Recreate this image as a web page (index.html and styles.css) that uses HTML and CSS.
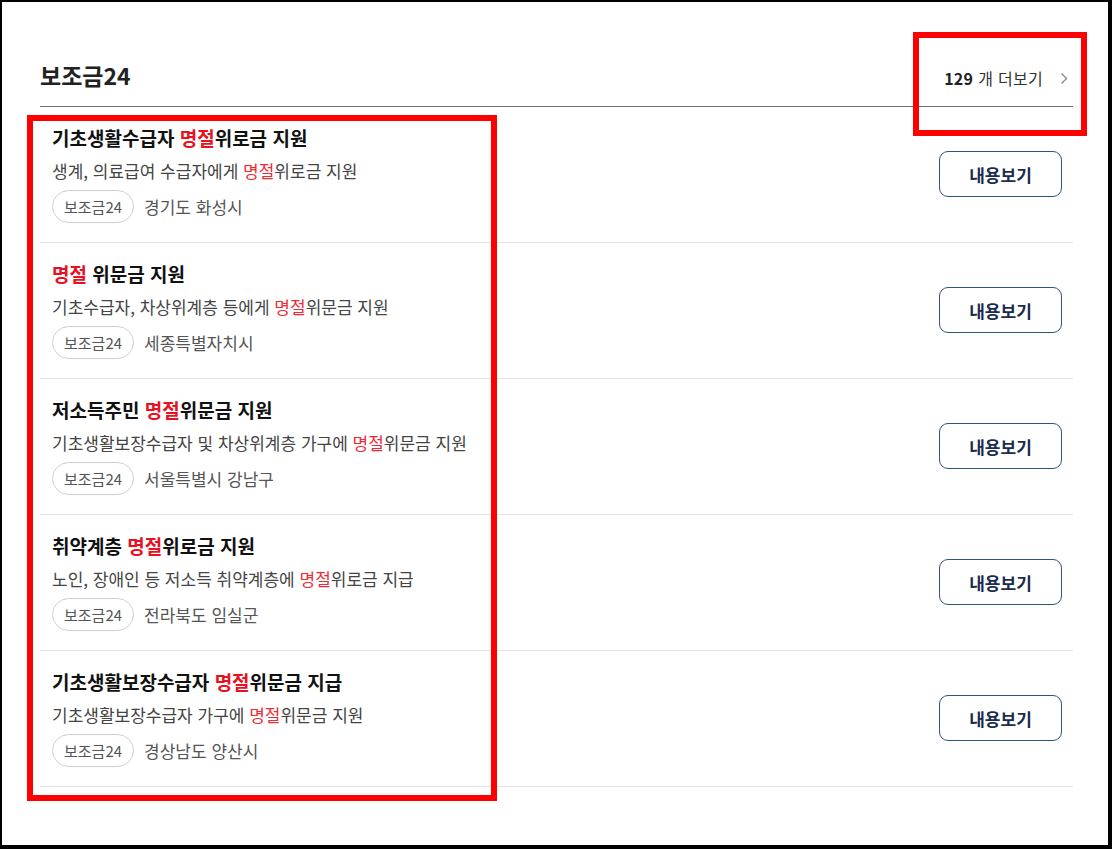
FILE: index.html
```html
<!DOCTYPE html>
<html lang="ko">
<head>
    <meta charset="UTF-8">
    <meta name="viewport" content="width=device-width, initial-scale=1.0">
    <title>보조금24</title>
    <link rel="stylesheet" href="styles.css">
</head>
<body>
    <div class="frame">
        <div class="section">
            <!-- En-tête -->
            <div class="section-head">
                <h2 class="section-title">보조금24</h2>
                <a class="more-link" href="#"><strong>129</strong> 개 더보기<svg class="chevron" width="8" height="13" viewBox="0 0 8 13"><path d="M1.5 1.5 L6.5 6.5 L1.5 11.5" fill="none" stroke="#888" stroke-width="1.4"/></svg></a>
            </div>

            <!-- Liste -->
            <ul class="list">
                <li class="item">
                    <div class="item-body">
                        <h3 class="item-title">기초생활수급자 <em>명절</em>위로금 지원</h3>
                        <p class="item-desc">생계, 의료급여 수급자에게 <em>명절</em>위로금 지원</p>
                        <div class="item-meta"><span class="tag">보조금24</span><span class="region">경기도 화성시</span></div>
                    </div>
                    <button class="view-btn">내용보기</button>
                </li>
                <li class="item">
                    <div class="item-body">
                        <h3 class="item-title"><em>명절</em> 위문금 지원</h3>
                        <p class="item-desc">기초수급자, 차상위계층 등에게 <em>명절</em>위문금 지원</p>
                        <div class="item-meta"><span class="tag">보조금24</span><span class="region">세종특별자치시</span></div>
                    </div>
                    <button class="view-btn">내용보기</button>
                </li>
                <li class="item">
                    <div class="item-body">
                        <h3 class="item-title">저소득주민 <em>명절</em>위문금 지원</h3>
                        <p class="item-desc">기초생활보장수급자 및 차상위계층 가구에 <em>명절</em>위문금 지원</p>
                        <div class="item-meta"><span class="tag">보조금24</span><span class="region">서울특별시 강남구</span></div>
                    </div>
                    <button class="view-btn">내용보기</button>
                </li>
                <li class="item">
                    <div class="item-body">
                        <h3 class="item-title">취약계층 <em>명절</em>위로금 지원</h3>
                        <p class="item-desc">노인, 장애인 등 저소득 취약계층에 <em>명절</em>위로금 지급</p>
                        <div class="item-meta"><span class="tag">보조금24</span><span class="region">전라북도 임실군</span></div>
                    </div>
                    <button class="view-btn">내용보기</button>
                </li>
                <li class="item">
                    <div class="item-body">
                        <h3 class="item-title">기초생활보장수급자 <em>명절</em>위문금 지급</h3>
                        <p class="item-desc">기초생활보장수급자 가구에 <em>명절</em>위문금 지원</p>
                        <div class="item-meta"><span class="tag">보조금24</span><span class="region">경상남도 양산시</span></div>
                    </div>
                    <button class="view-btn">내용보기</button>
                </li>
            </ul>
        </div>

        <!-- Cadres rouges d'annotation -->
        <div class="mark mark-more"></div>
        <div class="mark mark-list"></div>
    </div>
</body>
</html>
```

FILE: styles.css
```css
/* Styles globaux */
html, body {
    margin: 0;
    padding: 0;
    background: #fff;
    font-family: "Noto Sans CJK KR", "Noto Sans", sans-serif;
    color: #222;
}

.frame {
    position: relative;
    box-sizing: border-box;
    width: 1112px;
    height: 849px;
    border: 2px solid #000;
    border-right-width: 4px;
    border-bottom-width: 4px;
    padding: 58px 35px 0 38px;
}

/* En-tête */
.section-head {
    display: flex;
    align-items: center;
    justify-content: space-between;
    padding: 0 4px 16px 0;
    border-bottom: 1px solid #6f6f6f;
}

.section-title {
    margin: 0;
    font-size: 23px;
    line-height: 30px;
    font-weight: 700;
    color: #222;
}

.more-link {
    display: flex;
    align-items: center;
    margin-top: 6px;
    font-size: 16px;
    line-height: 24px;
    color: #333;
    text-decoration: none;
    white-space: pre;
    letter-spacing: 0.3px;
}

.more-link strong {
    font-weight: 700;
    color: #222;
}

.chevron {
    margin-left: 17px;
    margin-right: 1px;
}

/* Liste */
.list {
    list-style: none;
    margin: 0;
    padding: 0;
}

.item {
    display: flex;
    align-items: center;
    justify-content: space-between;
    padding: 18px 11px 19px 12px;
    border-bottom: 1px solid #e3e3e3;
}

.item-title {
    margin: 0;
    font-size: 19px;
    line-height: 26px;
    font-weight: 700;
    color: #111;
}

.item-desc {
    margin: 8px 0 0;
    font-size: 17px;
    line-height: 24px;
    color: #444;
}

em {
    font-style: normal;
    color: #e8111f;
}

.item-desc em {
    color: #ee2a35;
}

.item-meta {
    display: flex;
    align-items: center;
    margin-top: 7px;
}

.tag {
    box-sizing: border-box;
    height: 33px;
    padding: 0 11px;
    border: 1px solid #cfcfcf;
    border-radius: 17px;
    font-size: 15px;
    line-height: 31px;
    color: #555;
}

.region {
    margin-left: 10px;
    font-size: 17px;
    line-height: 24px;
    color: #555;
}

.view-btn {
    box-sizing: border-box;
    width: 123px;
    height: 46px;
    background: #fff;
    border: 1.5px solid #2f5289;
    border-radius: 9px;
    font-family: inherit;
    font-size: 17px;
    font-weight: 700;
    color: #1b2c4d;
    cursor: pointer;
}

/* Cadres rouges */
.mark {
    position: absolute;
    box-sizing: border-box;
    border: 6px solid #ff0000;
}

.mark-more {
    left: 911px;
    top: 30px;
    width: 174px;
    height: 104px;
}

.mark-list {
    left: 25px;
    top: 113px;
    width: 470px;
    height: 686px;
}
```
